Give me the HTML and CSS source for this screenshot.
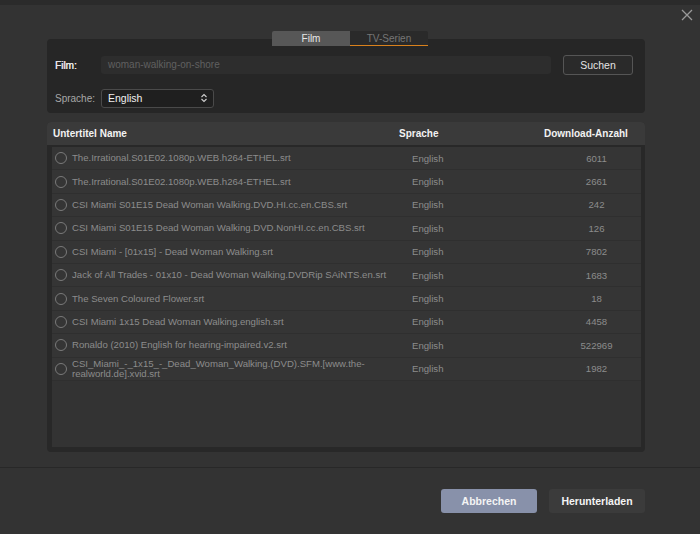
FILE: index.html
```html
<!DOCTYPE html>
<html lang="de">
<head>
<meta charset="utf-8">
<title>Untertitel suchen</title>
<link rel="stylesheet" href="styles.css">
</head>
<body>
<div class="topstrip"></div>
<button class="close" aria-label="Schließen">
  <svg width="12" height="12" viewBox="0 0 12 12"><path d="M1 1L11 11M11 1L1 11" stroke="#9a9a9a" stroke-width="1.3" fill="none"/></svg>
</button>
<main class="dialog">
  <div class="tabs">
    <div class="tab active">Film</div>
    <div class="tab">TV-Serien</div>
  </div>
  <section class="panel">
    <div class="form-row">
      <label class="lbl lbl-strong">Film:</label>
      <div class="input">woman-walking-on-shore</div>
      <button class="btn-search">Suchen</button>
    </div>
    <div class="form-row row2">
      <label class="lbl">Sprache:</label>
      <div class="select">
        <span>English</span>
        <svg width="8" height="10" viewBox="0 0 8 10"><path d="M1.5 4L4 1.5L6.5 4M1.5 6L4 8.5L6.5 6" stroke="#cfcfcf" stroke-width="1.1" fill="none"/></svg>
      </div>
    </div>
  </section>
  <section class="table">
    <div class="thead">
      <div>Untertitel Name</div>
      <div>Sprache</div>
      <div>Download-Anzahl</div>
    </div>
    <div class="tbody">
      <div class="tr"><div class="name"><span class="radio"></span><span class="nt">The.Irrational.S01E02.1080p.WEB.h264-ETHEL.srt</span></div><div class="lang">English</div><div class="cnt">6011</div></div>
      <div class="tr"><div class="name"><span class="radio"></span><span class="nt">The.Irrational.S01E02.1080p.WEB.h264-ETHEL.srt</span></div><div class="lang">English</div><div class="cnt">2661</div></div>
      <div class="tr"><div class="name"><span class="radio"></span><span class="nt">CSI Miami S01E15 Dead Woman Walking.DVD.HI.cc.en.CBS.srt</span></div><div class="lang">English</div><div class="cnt">242</div></div>
      <div class="tr"><div class="name"><span class="radio"></span><span class="nt">CSI Miami S01E15 Dead Woman Walking.DVD.NonHI.cc.en.CBS.srt</span></div><div class="lang">English</div><div class="cnt">126</div></div>
      <div class="tr"><div class="name"><span class="radio"></span><span class="nt">CSI Miami - [01x15] - Dead Woman Walking.srt</span></div><div class="lang">English</div><div class="cnt">7802</div></div>
      <div class="tr"><div class="name"><span class="radio"></span><span class="nt">Jack of All Trades - 01x10 - Dead Woman Walking.DVDRip SAiNTS.en.srt</span></div><div class="lang">English</div><div class="cnt">1683</div></div>
      <div class="tr"><div class="name"><span class="radio"></span><span class="nt">The Seven Coloured Flower.srt</span></div><div class="lang">English</div><div class="cnt">18</div></div>
      <div class="tr"><div class="name"><span class="radio"></span><span class="nt">CSI Miami 1x15 Dead Woman Walking.english.srt</span></div><div class="lang">English</div><div class="cnt">4458</div></div>
      <div class="tr"><div class="name"><span class="radio"></span><span class="nt">Ronaldo (2010) English for hearing-impaired.v2.srt</span></div><div class="lang">English</div><div class="cnt">522969</div></div>
      <div class="tr"><div class="name"><span class="radio"></span><span class="nt">CSI_Miami_-_1x15_-_Dead_Woman_Walking.(DVD).SFM.[www.the-realworld.de].xvid.srt</span></div><div class="lang">English</div><div class="cnt">1982</div></div>
    </div>
  </section>
</main>
<footer class="footer">
  <button class="btn btn-cancel">Abbrechen</button>
  <button class="btn btn-dl">Herunterladen</button>
</footer>
</body>
</html>
```
FILE: styles.css
```css
* { box-sizing: border-box; }
html, body { margin: 0; padding: 0; }
body {
  width: 700px;
  height: 534px;
  background: #333333;
  font-family: "Liberation Sans", Arial, sans-serif;
  font-size: 10px;
  color: #cfcfcf;
  position: relative;
  overflow: hidden;
}
.topstrip { height: 5px; background: #2b2b2b; }
.close {
  position: absolute;
  top: 8px;
  right: 6px;
  width: 14px;
  height: 14px;
  padding: 0;
  border: 0;
  background: transparent;
  display: flex;
  align-items: center;
  justify-content: center;
}
.dialog {
  padding: 26px 55px 0 47px;
  display: flex;
  flex-direction: column;
}
.tabs {
  display: flex;
  justify-content: center;
  padding-left: 8px;
  margin-bottom: -7px;
  position: relative;
  z-index: 1;
}
.tab {
  width: 78px;
  height: 15px;
  font-size: 10px;
  line-height: 15px;
  text-align: center;
  background: #2a2a2a;
  color: #767676;
  border-bottom: 1px solid #d9811c;
}
.tab:first-child { border-radius: 2px 0 0 0; }
.tab:last-child { border-radius: 0 2px 0 0; }
.tab.active {
  background: #575757;
  color: #e6e6e6;
  border-bottom-color: #575757;
}
.panel {
  background: #262626;
  border-radius: 4px;
  height: 74px;
  padding: 16px 12px 0 8px;
}
.form-row {
  display: flex;
  align-items: center;
  height: 20px;
}
.form-row.row2 { margin-top: 13px; }
.lbl {
  width: 46px;
  color: #a8a8a8;
  font-size: 10px;
}
.lbl-strong { color: #e8e8e8; text-shadow: 0.3px 0 0 #e8e8e8; }
.input {
  flex: 0 0 450px;
  height: 18px;
  background: #2d2d2d;
  border-radius: 3px;
  color: #606060;
  padding-left: 7px;
  line-height: 18px;
  font-size: 10px;
}
.btn-search {
  margin-left: auto;
  width: 70px;
  height: 20px;
  background: #2a2a2a;
  border: 1px solid #555;
  border-radius: 3px;
  color: #e4e4e4;
  font-family: inherit;
  font-size: 10.5px;
  padding: 0;
}
.select {
  width: 113px;
  height: 19px;
  background: #1f1f1f;
  border: 1px solid #4a4a4a;
  border-radius: 3px;
  display: flex;
  align-items: center;
  justify-content: space-between;
  padding: 0 5px 0 6px;
  color: #f0f0f0;
  font-size: 10.5px;
}
.table {
  margin-top: 9px;
  height: 330px;
  background: #282828;
  border-radius: 4px;
  display: flex;
  flex-direction: column;
  overflow: hidden;
}
.thead {
  display: grid;
  grid-template-columns: 352px 145px 1fr;
  height: 23px;
  align-items: center;
  background: #3a3a3a;
  font-weight: bold;
  color: #f2f2f2;
  font-size: 10px;
}
.thead > div:first-child { padding-left: 6px; }
.tbody {
  flex: 1;
  margin: 2px 4px 5px 5px;
  background: #333333;
}
.tr {
  display: grid;
  grid-template-columns: 348px 152px 1fr;
  height: 23.4px;
  align-items: center;
  border-bottom: 1px solid #2f2f2f;
  background: #353535;
  color: #8c8c8c;
  font-size: 9.6px;
}
.name {
  display: flex;
  align-items: center;
  padding-left: 3px;
}
.radio {
  flex: 0 0 12px;
  width: 12px;
  height: 12px;
  border: 1.3px solid #7a7a7a;
  border-radius: 50%;
  margin-right: 5px;
}
.nt {
  line-height: 10px;
  width: 325px;
}
.lang { padding-left: 12px; }
.cnt { text-align: center; }
.footer {
  position: absolute;
  left: 0;
  right: 0;
  top: 467px;
  bottom: 0;
  border-top: 1px solid #282828;
  display: flex;
  justify-content: flex-end;
  align-items: flex-start;
  gap: 12px;
  padding: 21px 55px 0 0;
}
.btn {
  width: 96px;
  height: 24px;
  border: 0;
  border-radius: 3px;
  font-family: inherit;
  font-weight: bold;
  font-size: 10.5px;
  color: #f4f4f4;
  padding: 0;
}
.btn-cancel { background: #8891aa; }
.btn-dl { background: #3b3b3b; }
```
